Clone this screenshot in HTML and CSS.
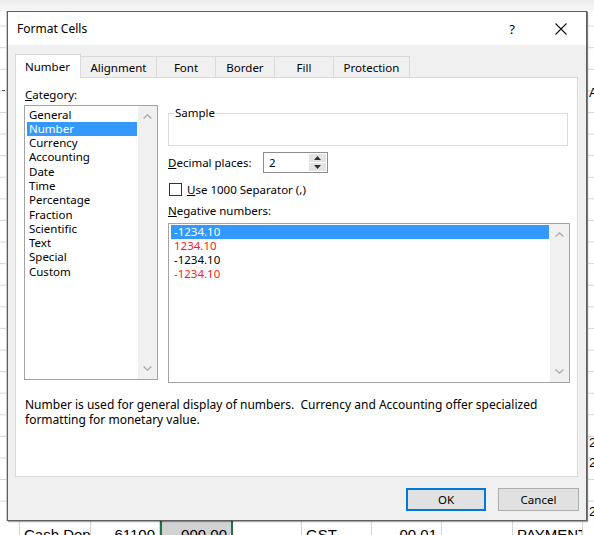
FILE: index.html
```html
<!DOCTYPE html>
<html>
<head>
<meta charset="utf-8">
<link rel="stylesheet" href="styles.css">
</head>
<body>
<div class="screen">
  <div class="top"></div>
  <div class="left-strip"><span class="dash"></span></div>
  <div class="dialog">
    <div class="titlebar">
      <span class="title">Format Cells</span>
      <span class="tb-help">?</span>
      <span class="tb-close"><svg width="12" height="12" viewBox="0 0 12 12"><path d="M0.5 0.5 L11.5 11.5 M11.5 0.5 L0.5 11.5" stroke="#111" stroke-width="1.1" fill="none"/></svg></span>
    </div>
    <div class="body">
      <div class="tabs">
        <div class="tab selected w-number">Number</div>
        <div class="tab w-align">Alignment</div>
        <div class="tab w-font">Font</div>
        <div class="tab w-border">Border</div>
        <div class="tab w-fill">Fill</div>
        <div class="tab w-prot">Protection</div>
      </div>
      <div class="panel">
        <div class="cols">
          <div class="left-col">
            <div class="label"><u>C</u>ategory:</div>
            <div class="listbox cat">
              <ul class="items">
                <li>General</li>
                <li class="sel">Number</li>
                <li>Currency</li>
                <li>Accounting</li>
                <li>Date</li>
                <li>Time</li>
                <li>Percentage</li>
                <li>Fraction</li>
                <li>Scientific</li>
                <li>Text</li>
                <li>Special</li>
                <li>Custom</li>
              </ul>
              <div class="scrollbar">
                <svg width="9" height="5" viewBox="0 0 9 5"><path d="M0.6 4.4 L4.5 0.8 L8.4 4.4" stroke="#ababab" stroke-width="1.3" fill="none"/></svg>
                <svg width="9" height="5" viewBox="0 0 9 5"><path d="M0.6 0.6 L4.5 4.2 L8.4 0.6" stroke="#ababab" stroke-width="1.3" fill="none"/></svg>
              </div>
            </div>
          </div>
          <div class="right-col">
            <fieldset class="sample">
              <legend>Sample</legend>
              <div class="sample-inner"></div>
            </fieldset>
            <div class="decimal-row">
              <span class="dec-label"><u>D</u>ecimal places:</span>
              <div class="spin">
                <span class="spin-val">2</span>
                <div class="spin-btns">
                  <span class="spin-btn"><svg width="7" height="4" viewBox="0 0 7 4"><path d="M0 4 L3.5 0 L7 4 Z" fill="#333"/></svg></span>
                  <span class="spin-btn"><svg width="7" height="4" viewBox="0 0 7 4"><path d="M0 0 L3.5 4 L7 0 Z" fill="#333"/></svg></span>
                </div>
              </div>
            </div>
            <div class="check-row">
              <span class="checkbox"></span>
              <span><u>U</u>se 1000 Separator (,)</span>
            </div>
            <div class="label neg-label"><u>N</u>egative numbers:</div>
            <div class="listbox neg">
              <ul class="items">
                <li class="sel">-1234.10</li>
                <li class="red">1234.10</li>
                <li>-1234.10</li>
                <li class="red">-1234.10</li>
              </ul>
              <div class="scrollbar">
                <svg width="9" height="5" viewBox="0 0 9 5"><path d="M0.6 4.4 L4.5 0.8 L8.4 4.4" stroke="#ababab" stroke-width="1.3" fill="none"/></svg>
                <svg width="9" height="5" viewBox="0 0 9 5"><path d="M0.6 0.6 L4.5 4.2 L8.4 0.6" stroke="#ababab" stroke-width="1.3" fill="none"/></svg>
              </div>
            </div>
          </div>
        </div>
        <p class="desc">Number is used for general display of numbers.&nbsp; Currency and Accounting offer specialized<br>formatting for monetary value.</p>
      </div>
      <div class="buttons">
        <button class="btn ok">OK</button>
        <button class="btn">Cancel</button>
      </div>
    </div>
  </div>
  <div class="right-strip">
    <span class="peek peek-a">A</span>
    <span class="peek peek-1">2</span>
    <span class="peek peek-2">2</span>
    <span class="peek peek-3">2</span>
  </div>
  <div class="sheet-row">
    <div class="cell c-head"></div>
    <div class="cell c-a">Cash Dep</div>
    <div class="cell c-b num">61100</div>
    <div class="cell c-c num active">000.00</div>
    <div class="cell c-d"></div>
    <div class="cell c-e">GST</div>
    <div class="cell c-f num">00.01</div>
    <div class="cell c-g"></div>
    <div class="cell c-h">PAYMENT 2</div>
    <div class="cell c-i"></div>
  </div>
</div>
</body>
</html>
```
FILE: styles.css
```css
* { box-sizing: border-box; }
html, body { margin: 0; padding: 0; background: #fff; }
body { font-family: "Noto Sans", "DejaVu Sans", sans-serif; font-size: 11.5px; color: #000; }

.screen {
  width: 594px;
  height: 535px;
  overflow: hidden;
  display: grid;
  grid-template-columns: 7px 580px 7px;
  grid-template-rows: 11px 510px 14px;
  background-color: #fff;
  background-image: linear-gradient(#d6d6d6 1px, transparent 1px);
  background-size: 100% 21.6px;
  background-position: 0 4px;
}
.top { grid-column: 1 / 4; background: linear-gradient(#ececec, #f7f7f7); }
.left-strip { border-right: 1px solid #c8c8c8; display: flex; flex-direction: column; }
.dash { width: 3px; height: 1px; background: #555; margin: 79px 0 0 2px; }

.dialog {
  background: #f0f0f0;
  border: 1px solid #5f5f5f;
  box-shadow: 1px 1px 1px rgba(0,0,0,0.35);
  display: flex;
  flex-direction: column;
  position: relative;
  z-index: 1;
}
.titlebar {
  height: 33px;
  background: #fff;
  display: flex;
  align-items: center;
  padding-left: 9px;
  font-size: 12px;
}
.title { flex: 1; }
.tb-help { width: 20px; text-align: center; font-size: 13px; }
.tb-close { width: 24px; margin-left: 27px; margin-right: 13px; display: flex; justify-content: center; }

.body { flex: 1; padding: 9px 8px 0 7px; display: flex; flex-direction: column; }
.tabs { display: flex; height: 23px; align-items: flex-end; position: relative; z-index: 2; }
.tab {
  height: 21px;
  border: 1px solid #d9d9d9;
  border-bottom: none;
  background: #f0f0f0;
  margin-left: -1px;
  display: flex;
  align-items: center;
  justify-content: center;
}
.tab.selected {
  height: 24px;
  margin-left: 0;
  margin-bottom: -1px;
  background: #fff;
  justify-content: flex-start;
  padding-left: 9px;
  position: relative;
  z-index: 3;
}
.w-number { width: 66px; }
.w-align { width: 77px; }
.w-font { width: 60px; }
.w-border { width: 60px; }
.w-fill { width: 60px; }
.w-prot { width: 77px; }

.panel {
  height: 400px;
  background: #fff;
  border: 1px solid #d9d9d9;
  padding: 10px 0 0 8px;
}
.cols { display: flex; gap: 10px; align-items: flex-start; }
.left-col { width: 134px; }
.right-col { width: 402px; display: flex; flex-direction: column; }
.label { line-height: 14px; padding-left: 1px; }

.listbox { border: 1px solid #a3a3a3; display: flex; background: #fff; }
.listbox.cat { margin-top: 3px; height: 275px; }
.listbox.neg { margin-top: 5px; height: 160px; }
.items { list-style: none; margin: 0; padding: 1px 1px 0 2px; flex: 1; }
.cat .items { padding-top: 1.5px; }
.cat .items li { line-height: 14.3px; padding-left: 2px; }
.neg .items li { line-height: 14px; padding-left: 3px; }
.items li.sel { background: #3399ff; color: #fff; }
.items li.red { color: #ff1a1a; }
.scrollbar {
  width: 19px;
  background: #f0f0f0;
  display: flex;
  flex-direction: column;
  justify-content: space-between;
  align-items: center;
  padding: 8px 0 8px 0;
}

.sample {
  margin: 18px 2px 0 0;
  padding: 0;
  border: 1px solid #dcdcdc;
  min-width: 0;
}
.sample legend { padding: 0 1px; margin-left: 5px; line-height: 14px; }
.sample-inner { height: 25px; }

.decimal-row { display: flex; align-items: center; margin-top: 6px; height: 21px; }
.dec-label { width: 95px; }
.spin { width: 65px; height: 21px; border: 1px solid #8c8c8c; display: flex; background: #fff; }
.spin-val { flex: 1; padding-left: 5px; line-height: 19px; }
.spin-btns { width: 19px; display: flex; flex-direction: column; padding: 1px; gap: 1px; }
.spin-btn { flex: 1; background: #e3e3e3; display: flex; align-items: center; justify-content: center; }

.check-row { display: flex; align-items: center; gap: 5px; margin-top: 10px; height: 13px; padding-left: 1px; }
.checkbox { width: 13px; height: 13px; border: 1px solid #333; background: #fff; }
.neg-label { margin-top: 8px; padding-left: 0; }

.desc { margin: 14px 0 0 0; padding-left: 1px; line-height: 15px; font-size: 12px; }

.buttons { display: flex; justify-content: flex-end; gap: 12px; margin-top: 11px; margin-right: -1px; }
.btn {
  font-family: inherit;
  font-size: 11.5px;
  height: 23px;
  width: 81px;
  background: #e1e1e1;
  border: 1px solid #adadad;
  color: #000;
  padding: 0;
}
.btn.ok { width: 80px; border: 2px solid #0078d7; }

.right-strip { border-left: 1px solid #bdbdbd; display: flex; flex-direction: column; overflow: hidden; font-family: "Liberation Sans", sans-serif; font-size: 13px; line-height: 14px; }
.peek { display: block; padding-left: 1px; }
.peek-a { margin-top: 75px; }
.peek-1 { margin-top: 336px; }
.peek-2 { margin-top: 6px; }
.peek-3 { margin-top: 35px; }

.sheet-row { grid-column: 1 / 4; display: flex; font-family: "Liberation Sans", sans-serif; font-size: 15px; line-height: 16px; background: #fff; }
.cell { border-right: 1px solid #d4d4d4; padding: 6px 4px 0 4px; white-space: nowrap; overflow: hidden; flex: none; }
.cell.num { text-align: right; }
.cell.active { background: #d2d2d2; border-left: 2px solid #217346; border-right: 2px solid #217346; }
.c-head { width: 20px; }
.c-a { width: 71px; }
.c-b { width: 69px; }
.c-c { width: 73px; }
.c-d { width: 69px; }
.c-e { width: 70px; }
.c-f { width: 70px; }
.c-g { width: 71px; }
.c-h { width: 70px; }
.c-i { width: 20px; }
```
